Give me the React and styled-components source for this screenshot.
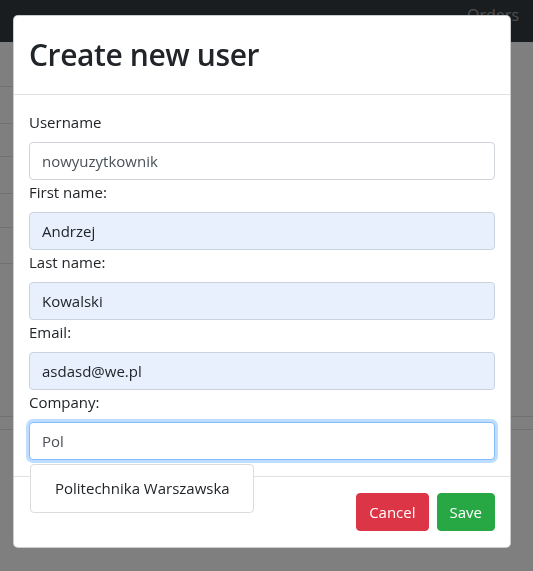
import React from "react";
import styled, { createGlobalStyle } from "styled-components";

const Global = createGlobalStyle`
  * { box-sizing: border-box; }
  html, body { margin: 0; padding: 0; }
  body {
    font-family: "Open Sans", "Liberation Sans", sans-serif;
    font-size: 16px;
    line-height: 1.5;
    color: #212529;
    background: #fff;
    overflow: hidden;
  }
`;

const Page = styled.div`
  width: 533px;
  height: 571px;
  position: relative;
  overflow: hidden;
`;

const Navbar = styled.nav`
  height: 42px;
  background: #343a40;
  display: flex;
  justify-content: flex-end;
  align-items: flex-start;
  padding: 3px 14px 0;
`;

const NavLink = styled.span`
  color: rgba(255, 255, 255, 0.5);
  font-size: 16px;
`;

const Table = styled.div`
  display: flex;
  flex-direction: column;
  width: 480px;
`;

const Row = styled.div`
  height: ${(p) => p.$h}px;
  border-bottom: 1px solid #dee2e6;
`;

const TableFoot = styled.div`
  margin-top: 152px;
  display: flex;
  flex-direction: column;
  gap: 12px;
`;

const Rule = styled.div`
  height: 1px;
  background: #dee2e6;
`;

const Backdrop = styled.div`
  position: fixed;
  inset: 0;
  background: rgba(0, 0, 0, 0.5);
`;

const Dialog = styled.div`
  position: fixed;
  left: 13px;
  top: 15px;
  width: 498px;
  background: #fff;
  border: 1px solid rgba(0, 0, 0, 0.2);
  border-radius: 5px;
  display: flex;
  flex-direction: column;
`;

const Header = styled.div`
  padding: 15px 15px;
  border-bottom: 1px solid #dee2e6;
`;

const Title = styled.h4`
  margin: 0;
  font-size: 30px;
  font-weight: 600;
  letter-spacing: -0.4px;
  line-height: 48px;
  color: #212529;
`;

const Body = styled.div`
  padding: 15px 15px 16px;
  display: flex;
  flex-direction: column;
`;

const Label = styled.label`
  display: block;
  margin-bottom: 8px;
  font-size: 15px;
  line-height: 24px;
  color: #212529;
`;

const Input = styled.div`
  height: 38px;
  padding: 6px 12px;
  font-size: 15px;
  line-height: 24px;
  border-radius: 4px;
  border: 1px solid ${(p) => (p.$focus ? "#80bdff" : p.$auto ? "#c9d3e0" : "#ced4da")};
  background: ${(p) => (p.$auto ? "#e8f0fe" : "#fff")};
  color: ${(p) => (p.$auto ? "#212529" : "#495057")};
  box-shadow: ${(p) => (p.$focus ? "0 0 0 3px rgba(0, 123, 255, 0.25)" : "none")};
`;

const AutoWrap = styled.div`
  position: relative;
`;

const Suggestions = styled.ul`
  position: absolute;
  left: 1px;
  top: 42px;
  margin: 0;
  padding: 0;
  list-style: none;
  background: #fff;
  border: 1px solid #dcdcdc;
  border-radius: 4px;
  z-index: 2;
`;

const Suggestion = styled.li`
  padding: 11px 23px 12px 24px;
  font-size: 15px;
  line-height: 24px;
  color: #212529;
  white-space: nowrap;
`;

const ModalFooter = styled.div`
  border-top: 1px solid #dee2e6;
  padding: 16px 15px 16px;
  display: flex;
  justify-content: flex-end;
  gap: 8px;
`;

const Button = styled.button`
  height: 38px;
  padding: 6px 12px;
  border: 1px solid ${(p) => p.$bg};
  background: ${(p) => p.$bg};
  color: #fff;
  font-family: inherit;
  font-size: 15px;
  line-height: 24px;
  border-radius: 4px;
`;

const fields = [
  { label: "First name:", value: "Andrzej" },
  { label: "Last name:", value: "Kowalski" },
  { label: "Email:", value: "asdasd@we.pl" },
];

export default function App() {
  return (
    <Page>
      <Global />
      <Navbar>
        <NavLink>Orders</NavLink>
      </Navbar>
      <Table>
        {[45, 37, 33, 37, 34, 36].map((h, i) => (
          <Row key={i} $h={h} />
        ))}
      </Table>
      <TableFoot>
        <Rule />
        <Rule />
      </TableFoot>
      <Backdrop />
      <Dialog>
        <Header>
          <Title>Create new user</Title>
        </Header>
        <Body>
          <Label>Username</Label>
          <Input>nowyuzytkownik</Input>
          {fields.map((f) => (
            <React.Fragment key={f.label}>
              <Label>{f.label}</Label>
              <Input $auto>{f.value}</Input>
            </React.Fragment>
          ))}
          <Label>Company:</Label>
          <AutoWrap>
            <Input $focus>Pol</Input>
            <Suggestions>
              <Suggestion>Politechnika Warszawska</Suggestion>
            </Suggestions>
          </AutoWrap>
        </Body>
        <ModalFooter>
          <Button $bg="#dc3545">Cancel</Button>
          <Button $bg="#28a745">Save</Button>
        </ModalFooter>
      </Dialog>
    </Page>
  );
}
